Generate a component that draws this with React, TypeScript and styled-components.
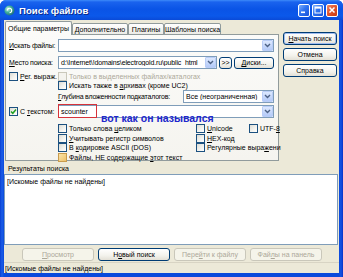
import React from 'react';
import styled, { createGlobalStyle } from 'styled-components';

const Global = createGlobalStyle`
  html, body { margin: 0; padding: 0; width: 343px; height: 277px; overflow: hidden; background: #fff; }
  body { font-family: "Liberation Sans", Arial, sans-serif; font-size: 7px; color: #000; }
  * { box-sizing: border-box; }
`;

const Window = styled.div`
  width: 343px;
  height: 277px;
  display: flex;
  flex-direction: column;
  background: linear-gradient(90deg, #0a3fd2 0, #1b5ee8 2px, #0a49dc 4px, #0a49dc calc(100% - 4px), #1553e2 calc(100% - 2px), #0631c6 100%);
  border-radius: 6px 6px 0 0;
  overflow: hidden;
`;

const TitleBar = styled.div`
  height: 20px;
  flex: none;
  display: flex;
  align-items: center;
  padding: 0 5px 0 4px;
  background: linear-gradient(180deg, #3d8bf9 0%, #1a63ee 10%, #0a54e6 45%, #0b58ea 80%, #0a4ad8 100%);
`;

const TitleIcon = styled.svg`
  width: 11px;
  height: 11px;
  flex: none;
`;

const TitleText = styled.div`
  margin-left: 4px;
  flex: 1;
  color: #fff;
  font-weight: bold;
  font-size: 9.5px;
  letter-spacing: 0.1px;
  text-shadow: 1px 1px 0 #0b2a8a;
`;

const CapGroup = styled.div`
  display: flex;
  gap: 2px;
`;

const CapBtn = styled.div<{ $close?: boolean }>`
  width: 12px;
  height: 13px;
  border: 1px solid #fff;
  border-radius: 2px;
  display: flex;
  align-items: center;
  justify-content: center;
  background: ${p => (p.$close
    ? 'linear-gradient(135deg, #f08a6a 0%, #e2572f 45%, #c93a10 100%)'
    : 'linear-gradient(135deg, #7fb0fb 0%, #2f73f0 45%, #1a53d8 100%)')};
`;

const Client = styled.div`
  flex: 1;
  margin: 0 4px 4px 4px;
  background: #ece9d8;
  display: flex;
  flex-direction: column;
`;

const TopArea = styled.div`
  height: 140px;
  flex: none;
  display: flex;
  gap: 4px;
  padding: 1px 2px 0 1px;
`;

const LeftCol = styled.div`
  width: 274px;
  display: flex;
  flex-direction: column;
`;

const TabStrip = styled.div`
  height: 14px;
  display: flex;
  align-items: flex-end;
  position: relative;
  z-index: 1;
`;

const Tab = styled.div<{ $active?: boolean; $w: number }>`
  width: ${p => p.$w}px;
  height: ${p => (p.$active ? 14 : 12)}px;
  border: 1px solid #919b9c;
  border-bottom: ${p => (p.$active ? '0' : '1px solid #919b9c')};
  border-radius: 2px 2px 0 0;
  background: ${p => (p.$active ? '#fbfbf9' : 'linear-gradient(180deg, #ffffff, #ecebe6)')};
  display: flex;
  align-items: center;
  justify-content: center;
  white-space: nowrap;
  font-size: 7px;
  padding-top: ${p => (p.$active ? 0 : 1)}px;
`;

const Panel = styled.div`
  position: relative;
  height: 127px;
  margin-top: -1px;
  border: 1px solid #919b9c;
  background: linear-gradient(180deg, #fbfbf9 0%, #f5f4ef 100%);
  padding: 0 4px 0 3px;
  display: flex;
  flex-direction: column;
`;

const Row = styled.div<{ $mt: number; $h: number }>`
  margin-top: ${p => p.$mt}px;
  height: ${p => p.$h}px;
  display: grid;
  grid-template-columns: 49px 1fr;
  align-items: center;
`;

const Label = styled.span`
  white-space: nowrap;
  letter-spacing: -0.2px;
`;

const Inline = styled.div`
  display: flex;
  align-items: center;
  gap: 2px;
  min-width: 0;
`;

const CheckLine = styled.label<{ $disabled?: boolean }>`
  display: flex;
  align-items: center;
  gap: 2px;
  white-space: nowrap;
  color: ${p => (p.$disabled ? '#aca899' : '#000')};
`;

const Box = styled.span<{ $disabled?: boolean; $hot?: boolean }>`
  width: 9px;
  height: 9px;
  flex: none;
  border: 1px solid ${p => (p.$disabled ? '#cac8bb' : p.$hot ? '#c89b4c' : '#1c5180')};
  background: ${p => (p.$disabled
    ? '#f4f3ee'
    : p.$hot
      ? 'linear-gradient(135deg, #fbe3a8, #eec26a)'
      : 'linear-gradient(135deg, #dcdcd5 0%, #f4f4f0 60%, #ffffff 100%)')};
  display: flex;
  align-items: center;
  justify-content: center;
`;

const Combo = styled.div<{ $w?: number }>`
  ${p => (p.$w ? `width: ${p.$w}px;` : 'flex: 1;')}
  height: 13px;
  border: 1px solid #7f9db9;
  background: #fff;
  display: flex;
  align-items: center;
  min-width: 0;
  position: relative;
`;

const ComboText = styled.span<{ $tight?: boolean }>`
  flex: 1;
  padding-left: 2px;
  white-space: nowrap;
  overflow: hidden;
  letter-spacing: ${p => (p.$tight ? '-0.15px' : '0')};
`;

const DropBtn = styled.span`
  width: 11px;
  height: 11px;
  flex: none;
  border: 1px solid #b9cdf7;
  border-radius: 1px;
  background: linear-gradient(180deg, #dce8fe, #b4caf8);
  display: flex;
  align-items: center;
  justify-content: center;
`;

const Marked = styled.span`
  height: 14px;
  width: 39px;
  margin: -1px 0 0 -1px;
  border: 1.5px solid #d6333a;
  display: flex;
  align-items: center;
  padding-left: 2px;
`;

const Btn = styled.div<{ $w?: number; $h?: number; $default?: boolean; $disabled?: boolean }>`
  ${p => (p.$w ? `width: ${p.$w}px;` : '')}
  height: ${p => p.$h ?? 13}px;
  flex: none;
  border: 1px solid ${p => (p.$disabled ? '#c9c7ba' : '#003c74')};
  border-radius: 3px;
  background: ${p => (p.$disabled ? '#f5f4ea' : 'linear-gradient(180deg, #ffffff 0%, #f3f2ec 60%, #e3e0d6 100%)')};
  color: ${p => (p.$disabled ? '#aca899' : '#000')};
  box-shadow: ${p => (p.$default ? 'inset 0 0 0 1px #9fbcef' : 'none')};
  display: flex;
  align-items: center;
  justify-content: center;
  white-space: nowrap;
`;

const U = styled.span`
  text-decoration: underline;
`;

const OptGrid = styled.div`
  margin-top: 6px;
  margin-left: 49px;
  display: grid;
  grid-template-columns: 138px 53px 1fr;
  grid-auto-rows: 9.5px;
  align-items: center;
`;

const Annotation = styled.div`
  position: absolute;
  left: 95px;
  top: 77px;
  color: #2026cc;
  font-family: "Liberation Sans", Arial, sans-serif;
  font-weight: bold;
  font-size: 10.5px;
  line-height: 12px;
  white-space: nowrap;
  pointer-events: none;
`;

const SideCol = styled.div`
  width: 54px;
  padding-top: 11px;
  display: flex;
  flex-direction: column;
  gap: 3px;
`;

const SectionLabel = styled.div`
  height: 14px;
  flex: none;
  padding: 5px 0 0 4px;
  font-size: 7px;
`;

const ListBox = styled.div`
  height: 71px;
  flex: none;
  margin-right: 1px;
  border: 1px solid #7f9db9;
  background: #fff;
  padding: 3px 2px;
`;

const ButtonRow = styled.div`
  margin-top: 3px;
  height: 13px;
  flex: none;
  display: flex;
  gap: 4px;
  padding-left: 18px;
`;

const StatusBar = styled.div`
  margin-top: 1px;
  flex: 1;
  border-top: 1px solid #d8d4c4;
  display: flex;
  align-items: center;
  padding-left: 1px;
`;

const Chevron = () => (
  <svg width="7" height="5" viewBox="0 0 7 5">
    <path d="M1 1 L3.5 3.5 L6 1" fill="none" stroke="#4d6185" strokeWidth="1.4" />
  </svg>
);

const Tick = () => (
  <svg width="7" height="7" viewBox="0 0 7 7">
    <path d="M1 3.5 L2.8 5.3 L6 1.6" fill="none" stroke="#21a121" strokeWidth="1.5" />
  </svg>
);

const Check: React.FC<{ checked?: boolean; disabled?: boolean; hot?: boolean; children: React.ReactNode }> = ({ checked, disabled, hot, children }) => (
  <CheckLine $disabled={disabled}>
    <Box $disabled={disabled} $hot={hot}>{checked && <Tick />}</Box>
    <span>{children}</span>
  </CheckLine>
);

export default function App() {
  return (
    <>
      <Global />
      <Window>
        <TitleBar>
          <TitleIcon viewBox="0 0 10 10">
            <defs>
              <radialGradient id="ic" cx="0.35" cy="0.35" r="0.7">
                <stop offset="0" stopColor="#c8f5e8" />
                <stop offset="0.5" stopColor="#3fae9a" />
                <stop offset="1" stopColor="#1f6c7c" />
              </radialGradient>
            </defs>
            <circle cx="5" cy="5" r="4.6" fill="url(#ic)" />
            <path d="M3 5 A2 2 0 1 1 5 7" fill="none" stroke="#fff" strokeWidth="1" />
          </TitleIcon>
          <TitleText>Поиск файлов</TitleText>
          <CapGroup>
            <CapBtn>
              <svg width="8" height="8" viewBox="0 0 8 8"><rect x="1" y="5.5" width="4" height="1.6" fill="#fff" /></svg>
            </CapBtn>
            <CapBtn>
              <svg width="8" height="8" viewBox="0 0 8 8"><rect x="1" y="1" width="6" height="6" fill="none" stroke="#fff" strokeWidth="1" /><rect x="1" y="1" width="6" height="1.6" fill="#fff" /></svg>
            </CapBtn>
            <CapBtn $close>
              <svg width="8" height="8" viewBox="0 0 8 8"><path d="M1.5 1.5 L6.5 6.5 M6.5 1.5 L1.5 6.5" stroke="#fff" strokeWidth="1.5" /></svg>
            </CapBtn>
          </CapGroup>
        </TitleBar>
        <Client>
          <TopArea>
            <LeftCol>
              <TabStrip>
                <Tab $active $w={67}>Общие параметры</Tab>
                <Tab $w={56}>Дополнительно</Tab>
                <Tab $w={36}>Плагины</Tab>
                <Tab $w={57}>Шаблоны поиска</Tab>
              </TabStrip>
              <Panel>
                <Row $mt={4} $h={13}>
                  <Label><U>И</U>скать файлы:</Label>
                  <Inline>
                    <Combo>
                      <ComboText />
                      <DropBtn><Chevron /></DropBtn>
                    </Combo>
                  </Inline>
                </Row>
                <Row $mt={4} $h={13}>
                  <Label><U>М</U>есто поиска:</Label>
                  <Inline>
                    <Combo $w={161}>
                      <ComboText $tight>d:\Internet\!domains\electrogold.ru\public_html</ComboText>
                      <DropBtn><Chevron /></DropBtn>
                    </Combo>
                    <Btn $w={13} $h={12}>&gt;&gt;</Btn>
                    <Btn $w={40} $h={12}><U>Д</U>иски...</Btn>
                  </Inline>
                </Row>
                <Row $mt={3} $h={9}>
                  <Check><U>Р</U>ег. выраж.</Check>
                  <Check disabled>Только в выделенных файлах/каталогах</Check>
                </Row>
                <Row $mt={0} $h={9}>
                  <span />
                  <Check>Искать также в <U>а</U>рхивах (кроме UC2)</Check>
                </Row>
                <Row $mt={0} $h={13}>
                  <span />
                  <Inline>
                    <Label style={{ flex: 1 }}><U>Г</U>лубина вложенности подкаталогов:</Label>
                    <Combo $w={91}>
                      <ComboText>Все (неограниченная)</ComboText>
                      <DropBtn><Chevron /></DropBtn>
                    </Combo>
                  </Inline>
                </Row>
                <Row $mt={2} $h={13}>
                  <Check checked>С <U>т</U>екстом:</Check>
                  <Inline>
                    <Combo>
                      <Marked>scounter</Marked>
                      <ComboText />
                      <DropBtn><Chevron /></DropBtn>
                    </Combo>
                  </Inline>
                </Row>
                <OptGrid>
                  <Check>Только слова <U>ц</U>еликом</Check>
                  <Check><U>U</U>nicode</Check>
                  <Check>UTF-<U>8</U></Check>
                  <Check><U>У</U>читывать регистр символов</Check>
                  <Check><U>H</U>EX-код</Check>
                  <span />
                  <Check>В <U>к</U>одировке ASCII (DOS)</Check>
                  <Check>Регулярные выра<U>ж</U>ени</Check>
                  <span />
                  <Check hot>Файлы, НЕ содержащие <U>э</U>тот текст</Check>
                </OptGrid>
                <Annotation>вот как он назывался</Annotation>
              </Panel>
            </LeftCol>
            <SideCol>
              <Btn $default><U>Н</U>ачать поиск</Btn>
              <Btn>Отмена</Btn>
              <Btn>Справка</Btn>
            </SideCol>
          </TopArea>
          <SectionLabel>Результаты поиска</SectionLabel>
          <ListBox>[Искомые файлы не найдены]</ListBox>
          <ButtonRow>
            <Btn $w={72} $disabled><U>П</U>росмотр</Btn>
            <Btn $w={72}>Н<U>о</U>вый поиск</Btn>
            <Btn $w={72} $disabled>Пере<U>й</U>ти к файлу</Btn>
            <Btn $w={72} $disabled>Фай<U>л</U>ы на панель</Btn>
          </ButtonRow>
          <StatusBar>[Искомые файлы не найдены]</StatusBar>
        </Client>
      </Window>
    </>
  );
}
